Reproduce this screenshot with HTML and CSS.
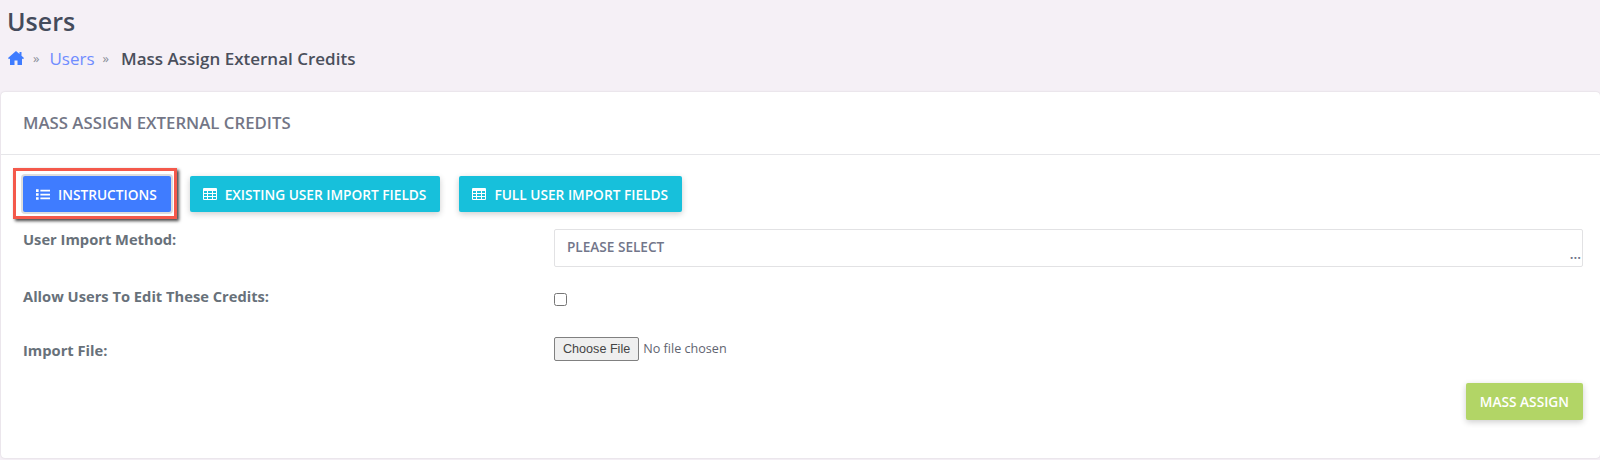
FILE: index.html
```html
<!DOCTYPE html>
<html lang="en">
<head>
    <meta charset="UTF-8">
    <title>Mass Assign External Credits</title>
    <link rel="stylesheet" href="styles.css">
</head>
<body>
    <div class="page-head">
        <h1 class="page-title">Users</h1>
        <div class="crumbs">
            <svg class="home-icon" viewBox="0 0 16 14" width="16" height="14"><path fill="#3f7cff" d="M8 0 0 7l1 1.200L2 7.400V14h4.500V9.500h3V14H14V7.400l1 .8L16 7l-2.500-2.200V1h-2v2L8 0z"/></svg>
            <span class="sep">»</span>
            <a class="crumb-link" href="#">Users</a>
            <span class="sep">»</span>
            <span class="crumb-current">Mass Assign External Credits</span>
        </div>
    </div>
    <div class="card">
        <div class="card-head">MASS ASSIGN EXTERNAL CREDITS</div>
        <div class="card-body">
            <div class="btn-row">
                <button class="btn btn-primary highlighted">
                    <svg class="btn-icon" viewBox="0 0 16 12" width="14" height="11"><path fill="currentColor" d="M0 0h3v3H0zM5 .5h11v2H5zM0 4.500h3v3H0zM5 5h11v2H5zM0 9h3v3H0zM5 9.500h11v2H5z"/></svg>
                    INSTRUCTIONS
                </button>
                <button class="btn btn-info">
                    <svg class="btn-icon" viewBox="0 0 14 12" width="14" height="12"><path fill="currentColor" d="M1 0h12a1 1 0 0 1 1 1v10a1 1 0 0 1-1 1H1a1 1 0 0 1-1-1V1a1 1 0 0 1 1-1zm0 3v2h3V3zm4 0v2h4V3zm5 0v2h3V3zM1 6v2h3V6zm4 0v2h4V6zm5 0v2h3V6zM1 9v2h3V9zm4 0v2h4V9zm5 0v2h3V9z"/></svg>
                    EXISTING USER IMPORT FIELDS
                </button>
                <button class="btn btn-info">
                    <svg class="btn-icon" viewBox="0 0 14 12" width="14" height="12"><path fill="currentColor" d="M1 0h12a1 1 0 0 1 1 1v10a1 1 0 0 1-1 1H1a1 1 0 0 1-1-1V1a1 1 0 0 1 1-1zm0 3v2h3V3zm4 0v2h4V3zm5 0v2h3V3zM1 6v2h3V6zm4 0v2h4V6zm5 0v2h3V6zM1 9v2h3V9zm4 0v2h4V9zm5 0v2h3V9z"/></svg>
                    FULL USER IMPORT FIELDS
                </button>
            </div>
            <div class="form-row row-select">
                <label class="form-label">User Import Method:</label>
                <div class="select-box">
                    <span>PLEASE SELECT</span>
                    <span class="select-more">...</span>
                </div>
            </div>
            <div class="form-row row-check">
                <label class="form-label">Allow Users To Edit These Credits:</label>
                <div class="form-field"><input type="checkbox" class="check"></div>
            </div>
            <div class="form-row row-file">
                <label class="form-label">Import File:</label>
                <div class="form-field"><input type="file" class="file-input"></div>
            </div>
            <div class="actions">
                <button class="btn btn-success">MASS ASSIGN</button>
            </div>
        </div>
    </div>
</body>
</html>
```

FILE: styles.css
```css
body {
    margin: 0;
    height: 460px;
    overflow: hidden;
    font-family: 'Open Sans', sans-serif;
    color: #6c757d;
    background: #f5f0f6;
}
.page-head {
    height: 92px;
    box-sizing: border-box;
    padding: 5px 7px 0;
}
.page-title {
    margin: 0;
    font-size: 25px;
    font-weight: 600;
    line-height: 32px;
    color: #444b5b;
}
.crumbs {
    display: flex;
    align-items: center;
    margin-top: 9px;
    height: 24px;
    font-size: 17px;
}
.home-icon {
    margin: 0 9px 0 1px;
}
.sep {
    font-size: 13px;
    color: #8a8f99;
}
.crumb-link {
    margin: 0 8px 0 10px;
    color: #6f8cff;
    text-decoration: none;
}
.crumb-current {
    margin-left: 12px;
    font-weight: 600;
    color: #4a4f5c;
}
.card {
    height: 366px;
    margin-left: 1px;
    background: #fff;
    border-radius: 4px;
    box-shadow: 0 0 2px rgba(0, 0, 0, 0.15);
}
.card-head {
    height: 63px;
    box-sizing: border-box;
    padding: 0 22px;
    line-height: 62px;
    font-size: 16.8px;
    font-weight: 600;
    color: #737686;
    border-bottom: 1px solid #e6e6e9;
}
.card-body {
    padding: 21px 17px 0 22px;
}
.btn-row {
    display: flex;
    gap: 19px;
}
.btn {
    display: inline-flex;
    align-items: center;
    height: 36px;
    padding: 0 14px 0 13px;
    border: 0;
    border-radius: 2px;
    font-family: inherit;
    font-size: 13.7px;
    font-weight: 600;
    color: #fff;
    box-shadow: 0 2px 6px rgba(0, 0, 0, 0.2);
}
.btn-icon {
    margin-right: 8px;
}
.btn-primary {
    background: #3f7cff;
    box-shadow: 0 0 0 2px #dddddd;
}
.btn-info {
    background: #17c0db;
}
.btn-success {
    height: 37px;
    padding: 0 14px;
    background: #b2d566;
}
.highlighted {
    position: relative;
}
/* red callout drawn over the screenshot, not centred on the button */
.highlighted::after {
    content: "";
    position: absolute;
    left: -10px;
    right: -6px;
    top: -8px;
    bottom: -7px;
    border: 3px solid #f4594b;
    box-shadow: 2px 2px 3px #444;
}
.form-row {
    display: grid;
    grid-template-columns: 531px 1fr;
}
.row-select {
    margin-top: 17px;
}
.row-check {
    margin-top: 19px;
    height: 53px;
}
.row-file {
    height: 44px;
}
.form-label {
    font-size: 14.7px;
    font-weight: 700;
    line-height: 20px;
    color: #68717a;
}
.row-file .form-label {
    padding-top: 1px;
}
.select-box {
    position: relative;
    height: 38px;
    box-sizing: border-box;
    padding: 0 12px;
    line-height: 34px;
    font-size: 13.6px;
    font-weight: 600;
    color: #72768a;
    border: 1px solid #e2e2e4;
    border-radius: 2px;
}
.select-more {
    position: absolute;
    right: 1px;
    bottom: 2px;
    line-height: 20px;
}
.check {
    display: block;
    width: 13px;
    height: 13px;
    margin: 7px 0 0;
}
.form-field {
    min-width: 0;
}
.file-input {
    display: block;
    font-family: inherit;
    font-size: 12.6px;
    color: #5f6470;
    margin-top: -2px;
}
.file-input::file-selector-button {
    height: 24px;
    padding: 0 8px;
    color: #444;
    background: #efefef;
    border: 1px solid #808080;
    border-radius: 2px;
}
.actions {
    display: flex;
    justify-content: flex-end;
}
```
